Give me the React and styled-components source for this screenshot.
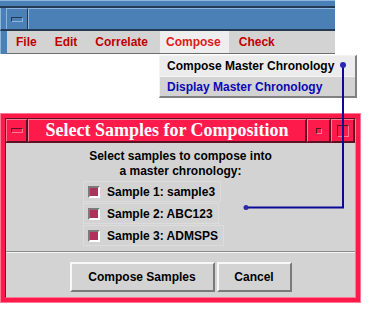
import React from "react";
import styled, { createGlobalStyle } from "styled-components";

const GlobalStyle = createGlobalStyle`
  html, body {
    margin: 0;
    padding: 0;
    background: #ffffff;
  }
  body {
    font-family: "Liberation Sans", Arial, sans-serif;
    font-weight: bold;
    font-size: 12px;
  }
  * {
    box-sizing: border-box;
  }
`;

const Page = styled.div`
  position: relative;
  width: 371px;
  height: 312px;
  overflow: hidden;
  background: #fff;
`;

/* ---------- main application window ---------- */

const MainWindow = styled.div`
  position: relative;
  width: 335px;
  background: #4a80b5;
`;

const TopEdge = styled.div`
  height: 8px;
  border-top: 1px solid #8db6de;
  border-bottom: 2px solid #243a52;
`;

const TitleRow = styled.div`
  display: flex;
  height: 23px;
  padding-left: 5px;
  border-bottom: 2px solid #243a52;
  border-left: 1px solid #8db6de;
`;

const BlueButton = styled.div`
  width: 22px;
  display: flex;
  align-items: center;
  justify-content: center;
  border-top: 1px solid #8db6de;
  border-left: 1px solid #8db6de;
  border-right: 1px solid #243a52;
  span {
    width: 12px;
    height: 5px;
    border: 1px solid #243a52;
    border-bottom-color: #8db6de;
    border-right-color: #8db6de;
  }
`;

const BlueTitle = styled.div`
  flex: 1;
  border-top: 1px solid #8db6de;
  border-left: 1px solid #8db6de;
`;

const MenuRow = styled.div`
  padding-left: 6px;
  border-left: 1px solid #8db6de;
`;

const MenuBar = styled.div`
  position: relative;
  display: flex;
  gap: 4px;
  height: 23px;
  padding-left: 3px;
  background: #d3d3d3;
  border-bottom: 1px solid #6e6e6e;
`;

const MenuItem = styled.div`
  display: flex;
  align-items: center;
  padding: 0 8px 0 6px;
  color: ${({ active }) => (active ? "#e01818" : "#c00000")};
  background: ${({ active }) => (active ? "#eeeeee" : "transparent")};
`;

const Dropdown = styled.div`
  position: absolute;
  left: 152px;
  top: 24px;
  width: 198px;
  background: #d3d3d3;
  border-left: 1px solid #f4f4f4;
  border-top: 1px solid #f4f4f4;
  border-right: 2px solid #808080;
  border-bottom: 2px solid #808080;
`;

const DropItem = styled.div`
  height: 20px;
  display: flex;
  align-items: center;
  padding-left: 7px;
  color: ${({ blue }) => (blue ? "#0a0ab4" : "#000")};
  background: ${({ hot }) => (hot ? "#ececec" : "#d3d3d3")};
  border-top: ${({ blue }) => (blue ? "1px solid #f4f4f4" : "none")};
`;

/* ---------- dialog ---------- */

const Dialog = styled.div`
  margin-top: 59px;
  width: 361px;
  padding: 4px;
  background: #ff1a4c;
  border: 1px solid #ff7895;
`;

const DialogInner = styled.div`
  border: 1px solid #5c1424;
  border-right-color: #ff7895;
  border-bottom-color: #ff7895;
`;

const DialogTitleRow = styled.div`
  display: flex;
  height: 24px;
  border-bottom: 1px solid #5c1424;
`;

const RedCell = styled.div`
  width: ${({ w }) => (w ? `${w}px` : "auto")};
  flex: ${({ w }) => (w ? "none" : "1")};
  display: flex;
  align-items: center;
  justify-content: center;
  background: #ff1a4c;
  border-top: 1px solid #ff7895;
  border-left: 1px solid #ff7895;
  border-right: 2px solid #5c1424;
  border-bottom: 1px solid #5c1424;
`;

const Glyph = styled.span`
  display: block;
  width: ${({ w }) => w}px;
  height: ${({ h }) => h}px;
  border: 1px solid #5c1424;
  border-right-color: #ff7895;
  border-bottom-color: #ff7895;
`;

const DialogTitle = styled.span`
  font-family: "Liberation Serif", "Times New Roman", serif;
  font-weight: bold;
  font-size: 18px;
  color: #ffffff;
`;

const Body = styled.div`
  background: #d3d3d3;
  display: flex;
  flex-direction: column;
`;

const Prompt = styled.div`
  padding-top: 6px;
  text-align: center;
  line-height: 15px;
  color: #000;
`;

const SampleList = styled.div`
  display: flex;
  flex-direction: column;
  align-items: flex-start;
  gap: 1px;
  padding: 2px 0 5px 77px;
`;

const SampleRow = styled.label`
  display: flex;
  align-items: center;
  gap: 7px;
  height: 21px;
  padding: 0 5px 0 4px;
  border: 1px solid #dcdcdc;
  color: #000;
`;

const Check = styled.span`
  width: 12px;
  height: 12px;
  background: #b0305c;
  border: 2px solid #7a7a7a;
  border-right-color: #ffffff;
  border-bottom-color: #ffffff;
`;

const Separator = styled.div`
  border-top: 1px solid #8a8a8a;
  border-bottom: 1px solid #f4f4f4;
`;

const ButtonRow = styled.div`
  display: flex;
  justify-content: center;
  gap: 2px;
  padding: 9px 0 5px;
`;

const PushButton = styled.button`
  width: ${({ w }) => w}px;
  height: 30px;
  font: inherit;
  color: #000;
  background: #d3d3d3;
  border: 2px solid #f8f8f8;
  border-right-color: #7a7a7a;
  border-bottom-color: #7a7a7a;
  padding: 0;
`;

const Connector = styled.svg`
  position: absolute;
  left: 0;
  top: 0;
  pointer-events: none;
`;

const menu = ["File", "Edit", "Correlate", "Compose", "Check"];
const samples = ["Sample 1: sample3", "Sample 2: ABC123", "Sample 3: ADMSPS"];

export default function App() {
  return (
    <Page>
      <GlobalStyle />
      <MainWindow>
        <TopEdge />
        <TitleRow>
          <BlueButton>
            <span />
          </BlueButton>
          <BlueTitle />
        </TitleRow>
        <MenuRow>
          <MenuBar>
            {menu.map((m) => (
              <MenuItem key={m} active={m === "Compose"}>
                {m}
              </MenuItem>
            ))}
            <Dropdown>
              <DropItem hot>Compose Master Chronology</DropItem>
              <DropItem blue>Display Master Chronology</DropItem>
            </Dropdown>
          </MenuBar>
        </MenuRow>
      </MainWindow>

      <Dialog>
        <DialogInner>
          <DialogTitleRow>
            <RedCell w={22}>
              <Glyph w={12} h={5} />
            </RedCell>
            <RedCell>
              <DialogTitle>Select Samples for Composition</DialogTitle>
            </RedCell>
            <RedCell w={24}>
              <Glyph w={6} h={6} />
            </RedCell>
            <RedCell w={24}>
              <Glyph w={12} h={12} />
            </RedCell>
          </DialogTitleRow>
          <Body>
            <Prompt>
              Select samples to compose into
              <br />
              a master chronology:
            </Prompt>
            <SampleList>
              {samples.map((s) => (
                <SampleRow key={s}>
                  <Check />
                  {s}
                </SampleRow>
              ))}
            </SampleList>
            <Separator />
            <ButtonRow>
              <PushButton w={145}>Compose Samples</PushButton>
              <PushButton w={75}>Cancel</PushButton>
            </ButtonRow>
          </Body>
        </DialogInner>
      </Dialog>

      <Connector width="371" height="312">
        <polyline
          points="343,65 343,207.5 246,207.5"
          fill="none"
          stroke="#0a0a96"
          strokeWidth="2"
        />
        <circle cx="343" cy="65" r="3" fill="#2a2ab0" />
        <circle cx="246" cy="207.5" r="2.5" fill="#2a2ab0" />
      </Connector>
    </Page>
  );
}
